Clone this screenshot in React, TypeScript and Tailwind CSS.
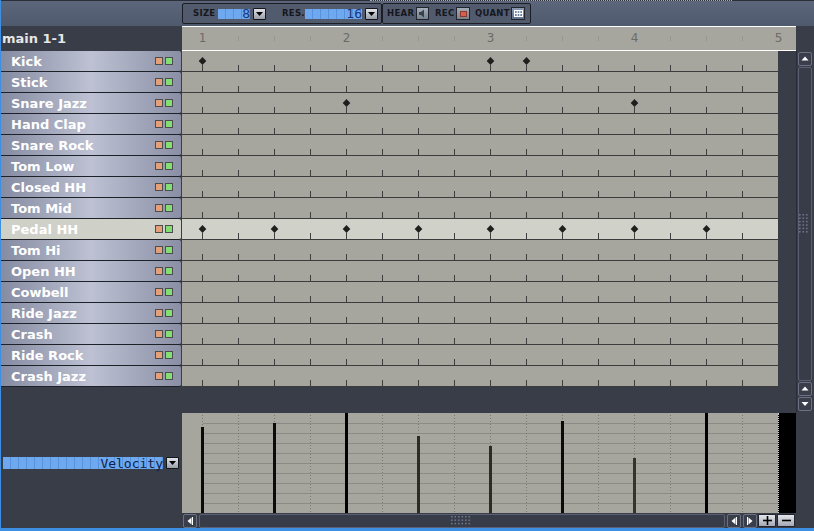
import React from "react";

const INSTRUMENTS = [
  "Kick",
  "Stick",
  "Snare Jazz",
  "Hand Clap",
  "Snare Rock",
  "Tom Low",
  "Closed HH",
  "Tom Mid",
  "Pedal HH",
  "Tom Hi",
  "Open HH",
  "Cowbell",
  "Ride Jazz",
  "Crash",
  "Ride Rock",
  "Crash Jazz",
];

const NOTES: Record<string, number[]> = {
  Kick: [0, 8, 9],
  "Snare Jazz": [4, 12],
  "Pedal HH": [0, 2, 4, 6, 8, 10, 12, 14],
};

const SELECTED = "Pedal HH";
const STEPS = Array.from({ length: 16 }, (_, i) => i);
const stepX = (i: number) => 20 + i * 36;

// step, top of bar (px from the top of the editor), colour
const VELOCITY: [number, number, string][] = [
  [0, 14, "#0b0b0b"],
  [2, 10, "#0b0b0b"],
  [4, 0, "#000000"],
  [6, 23, "#2b2b27"],
  [8, 33, "#2b2b27"],
  [10, 8, "#0b0b0b"],
  [12, 45, "#33332f"],
  [14, 0, "#000000"],
];

function Tri({ dir }: { dir: "up" | "down" | "left" | "right" }) {
  const pts = {
    up: "0.5,5.5 4,1.5 7.5,5.5",
    down: "0.5,2 4,6 7.5,2",
    left: "5.5,0.5 1.5,4 5.5,7.5",
    right: "2.5,0.5 6.5,4 2.5,7.5",
  }[dir];
  return (
    <svg width={8} height={8} className="block">
      <polygon points={pts} fill="#ffffff" />
      {dir === "left" && <line x1={6.5} x2={6.5} y1={0} y2={8} stroke="#ffffff" />}
      {dir === "right" && <line x1={1.5} x2={1.5} y1={0} y2={8} stroke="#ffffff" />}
    </svg>
  );
}

function ScrollBtn({ dir }: { dir: "up" | "down" | "left" | "right" }) {
  return (
    <div className="w-[14px] h-[14px] shrink-0 rounded-[2px] border border-[#6b7184] bg-[#3a3e4a] flex items-center justify-center">
      <Tri dir={dir} />
    </div>
  );
}

function Grip({ cols, rows }: { cols: number; rows: number }) {
  return (
    <svg width={cols * 3.5} height={rows * 3.4} className="block">
      {Array.from({ length: cols * rows }, (_, k) => (
        <rect
          key={k}
          x={(k % cols) * 3.5}
          y={Math.floor(k / cols) * 3.4}
          width={1.6}
          height={1.6}
          fill="#6b7289"
        />
      ))}
    </svg>
  );
}

function Dropdown() {
  return (
    <div className="w-[13px] h-[12px] shrink-0 border border-[#15161a] rounded-[1px] bg-[linear-gradient(#dfe2e8,#9a9ea8)] flex items-center justify-center">
      <svg width={7} height={4} className="block">
        <polygon points="0,0 7,0 3.5,4" fill="#000" />
      </svg>
    </div>
  );
}

function Lcd({ width, value }: { width: string; value: string }) {
  return (
    <div
      className={`${width} h-[10px] shrink-0 bg-[repeating-linear-gradient(90deg,#6ea9f0_0px,#6ea9f0_7px,#5892de_7px,#5892de_8px)] flex items-center justify-end font-['DejaVu_Sans_Mono',monospace] text-[13px] leading-none text-[#16357a]`}
    >
      {value}
    </div>
  );
}

function Label({ width, children }: { width: string; children: React.ReactNode }) {
  return (
    <span
      className={`${width} shrink-0 whitespace-nowrap text-[8.5px] font-bold leading-none tracking-[0.3px] text-[#15171d]`}
    >
      {children}
    </span>
  );
}

function Toolbar() {
  return (
    <div className="h-[26px] shrink-0 flex flex-col bg-[linear-gradient(#5d677b,#505a6d)]">
      <div className="h-[1px] bg-[#2c2f38] flex">
        <div className="ml-[369px] w-[362px] border-t border-dotted border-[#a3abbd]" />
      </div>
      <div className="flex pl-[181px] pt-[2px]">
        <div className="w-[200px] h-[21px] border border-[#1b1d23] rounded-[2px] bg-[#525b6e] flex items-center pl-[10px]">
          <Label width="w-[25px]">SIZE</Label>
          <Lcd width="w-[32px]" value="8" />
          <div className="ml-[3px]">
            <Dropdown />
          </div>
          <div className="ml-[16px] flex">
            <Label width="w-[23px]">RES.</Label>
          </div>
          <Lcd width="w-[57px]" value="16" />
          <div className="ml-[3px]">
            <Dropdown />
          </div>
        </div>
        <div className="w-[149px] h-[21px] border border-[#1b1d23] rounded-[2px] bg-[#525b6e] flex items-center pl-[4px]">
          <Label width="w-[29px]">HEAR</Label>
          <div className="w-[13px] h-[13px] shrink-0 border border-[#22252c] bg-[linear-gradient(#a4aebd,#77828f)] flex items-center justify-center">
            <svg width={9} height={9} className="block">
              <rect x={1} y={3} width={2} height={3} fill="#3a3f48" />
              <polygon points="3,3 6,0.5 6,8.5 3,6" fill="#3a3f48" />
            </svg>
          </div>
          <div className="ml-[6px] flex">
            <Label width="w-[21px]">REC</Label>
          </div>
          <div className="w-[14px] h-[13px] shrink-0 border border-[#22252c] bg-[linear-gradient(#a4aab4,#7c838d)] flex items-center justify-center">
            <div className="w-[7px] h-[6px] bg-[#d6604d] border border-[#8c3a30]" />
          </div>
          <div className="ml-[5px] flex">
            <Label width="w-[36px]">QUANT</Label>
          </div>
          <div className="w-[14px] h-[13px] shrink-0 border border-[#22252c] bg-[linear-gradient(#8a9ab4,#60708c)] flex items-center justify-center">
            <svg width={9} height={7} className="block">
              <rect x={0.5} y={0.5} width={8} height={6} fill="none" stroke="#ffffff" />
              <line x1={3.2} x2={3.2} y1={0} y2={7} stroke="#ffffff" />
              <line x1={5.8} x2={5.8} y1={0} y2={7} stroke="#ffffff" />
              <line x1={0} x2={9} y1={3.5} y2={3.5} stroke="#ffffff" />
            </svg>
          </div>
        </div>
      </div>
    </div>
  );
}

function NameRow({ name }: { name: string }) {
  const sel = name === SELECTED;
  return (
    <div
      className={`h-[21px] shrink-0 flex items-center pl-[10px] pr-[8px] border-b border-[#1f2128] rounded-r-[2px] ${
        sel ? "bg-[#cfd0c8]" : "bg-[linear-gradient(90deg,#858ba1,#bdc1d3_50%,#8a8fa5)]"
      }`}
    >
      <span className="flex-1 text-[13px] font-bold leading-none text-white">{name}</span>
      <span className="w-[8px] h-[8px] border border-[#4d4d4d] bg-[#e5a07a]" />
      <span className="ml-[2px] w-[8px] h-[8px] border border-[#4d4d4d] bg-[#84de74]" />
    </div>
  );
}

function GridRow({ name }: { name: string }) {
  const sel = name === SELECTED;
  const notes = NOTES[name] ?? [];
  return (
    <div
      className={
        sel
          ? "h-[21px] shrink-0 border-b border-[#3c3c3c] bg-[#d0d1c9]"
          : "h-[21px] shrink-0 border-b border-[#3c3c3c] bg-[#a6a69f]"
      }
    >
      <svg width={596} height={20} className="block">
        {STEPS.map((i) => (
          <line
            key={i}
            x1={stepX(i) + 0.5}
            x2={stepX(i) + 0.5}
            y1={14}
            y2={20}
            stroke="#3f3f3f"
          />
        ))}
        {notes.map((i) => {
          const x = stepX(i) + 0.5;
          return (
            <polygon
              key={i}
              points={`${x},6 ${x + 3.8},10 ${x},14 ${x - 3.8},10`}
              fill="#1e1e1e"
            />
          );
        })}
      </svg>
    </div>
  );
}

function Ruler() {
  return (
    <div className="ml-[1px] w-[614px] h-[25px] border-y border-white bg-[#a6a69f]">
      <svg width={614} height={23} className="block">
        {STEPS.filter((i) => i % 4 !== 0).map((i) => (
          <line
            key={i}
            x1={stepX(i) + 0.5}
            x2={stepX(i) + 0.5}
            y1={9}
            y2={14}
            stroke="#96968f"
          />
        ))}
        {[1, 2, 3, 4, 5].map((n) => (
          <text
            key={n}
            x={20.5 + (n - 1) * 144}
            y={15}
            textAnchor="middle"
            fontSize={12}
            fill="#6b6b68"
            fontFamily="DejaVu Sans, sans-serif"
          >
            {n}
          </text>
        ))}
      </svg>
    </div>
  );
}

function VelocityEditor() {
  return (
    <div className="ml-[1px] w-[596px] h-[100px] bg-[#a6a69f]">
      <svg width={596} height={100} className="block">
        {[1, 2, 3, 4, 5, 6, 7, 8, 9].map((k) => (
          <line key={k} x1={21} x2={596} y1={k * 10 + 0.5} y2={k * 10 + 0.5} stroke="#8b8b87" />
        ))}
        {STEPS.map((i) => (
          <line
            key={i}
            x1={stepX(i) + 0.5}
            x2={stepX(i) + 0.5}
            y1={2}
            y2={100}
            stroke="#777774"
            strokeDasharray="1 2"
          />
        ))}
        {VELOCITY.map(([s, top, c]) => (
          <rect key={s} x={stepX(s) - 1} y={top} width={3} height={100 - top} fill={c} />
        ))}
      </svg>
    </div>
  );
}

export default function App() {
  return (
    <div className="w-[814px] h-[531px] bg-[#393d48] border-l border-b-[3px] border-[#3d8fe4] flex flex-col overflow-hidden font-['DejaVu_Sans',sans-serif]">
      <Toolbar />

      {/* header: pattern name + ruler */}
      <div className="flex h-[25px] shrink-0">
        <div className="w-[180px] flex items-center pl-[1px] text-[13px] font-bold leading-none text-[#e6e6e6]">
          main 1-1
        </div>
        <Ruler />
      </div>

      {/* instruments + pattern grid */}
      <div className="flex h-[362px] shrink-0">
        <div className="w-[180px] flex flex-col">
          {INSTRUMENTS.map((n) => (
            <NameRow key={n} name={n} />
          ))}
        </div>
        <div className="ml-[1px] w-[596px] flex flex-col">
          {INSTRUMENTS.map((n) => (
            <GridRow key={n} name={n} />
          ))}
        </div>
        <div className="w-[18px]" />
        <div className="w-[16px] flex flex-col items-center pt-[1px] gap-[1px] border-l border-[#2a2d35]">
          <ScrollBtn dir="up" />
          <div className="w-[14px] h-[314px] rounded-[2px] border border-[#5a6074] bg-[#383c48] flex items-center justify-center">
            <Grip cols={3} rows={6} />
          </div>
          <ScrollBtn dir="up" />
          <ScrollBtn dir="down" />
        </div>
      </div>

      {/* velocity editor */}
      <div className="flex h-[100px] shrink-0">
        <div className="w-[180px] flex items-center pl-[2px] gap-[3px]">
          <div className="w-[160px] h-[12px] bg-[repeating-linear-gradient(90deg,#6ea9f0_0px,#6ea9f0_7px,#5892de_7px,#5892de_8px)] flex items-center justify-end font-['DejaVu_Sans_Mono',monospace] text-[13px] leading-none text-[#10214b]">
            Velocity
          </div>
          <Dropdown />
        </div>
        <VelocityEditor />
        <div className="w-[18px] bg-black border-l border-dotted border-[#cfcfcf]" />
      </div>

      {/* horizontal scroll + zoom */}
      <div className="flex h-[15px] shrink-0 pt-[1px]">
        <div className="w-[182px]" />
        <ScrollBtn dir="left" />
        <div className="ml-[2px] w-[526px] h-[14px] rounded-[2px] border border-[#5a6074] bg-[#383c48] flex items-center justify-end pr-[252px]">
          <Grip cols={6} rows={3} />
        </div>
        <div className="ml-[2px]">
          <ScrollBtn dir="left" />
        </div>
        <div className="ml-[2px]">
          <ScrollBtn dir="right" />
        </div>
        <div className="ml-[1px] w-[18px] h-[13px] border border-[#23252c] rounded-[1px] bg-[linear-gradient(#e4e6ec,#a3a8b4)] flex items-center justify-center">
          <svg width={9} height={9} className="block">
            <line x1={0} x2={9} y1={4.5} y2={4.5} stroke="#000" strokeWidth={1.6} />
            <line x1={4.5} x2={4.5} y1={0} y2={9} stroke="#000" strokeWidth={1.6} />
          </svg>
        </div>
        <div className="ml-[1px] w-[18px] h-[13px] border border-[#23252c] rounded-[1px] bg-[linear-gradient(#e4e6ec,#a3a8b4)] flex items-center justify-center">
          <svg width={9} height={9} className="block">
            <line x1={0} x2={9} y1={4.5} y2={4.5} stroke="#000" strokeWidth={1.6} />
          </svg>
        </div>
      </div>
    </div>
  );
}
